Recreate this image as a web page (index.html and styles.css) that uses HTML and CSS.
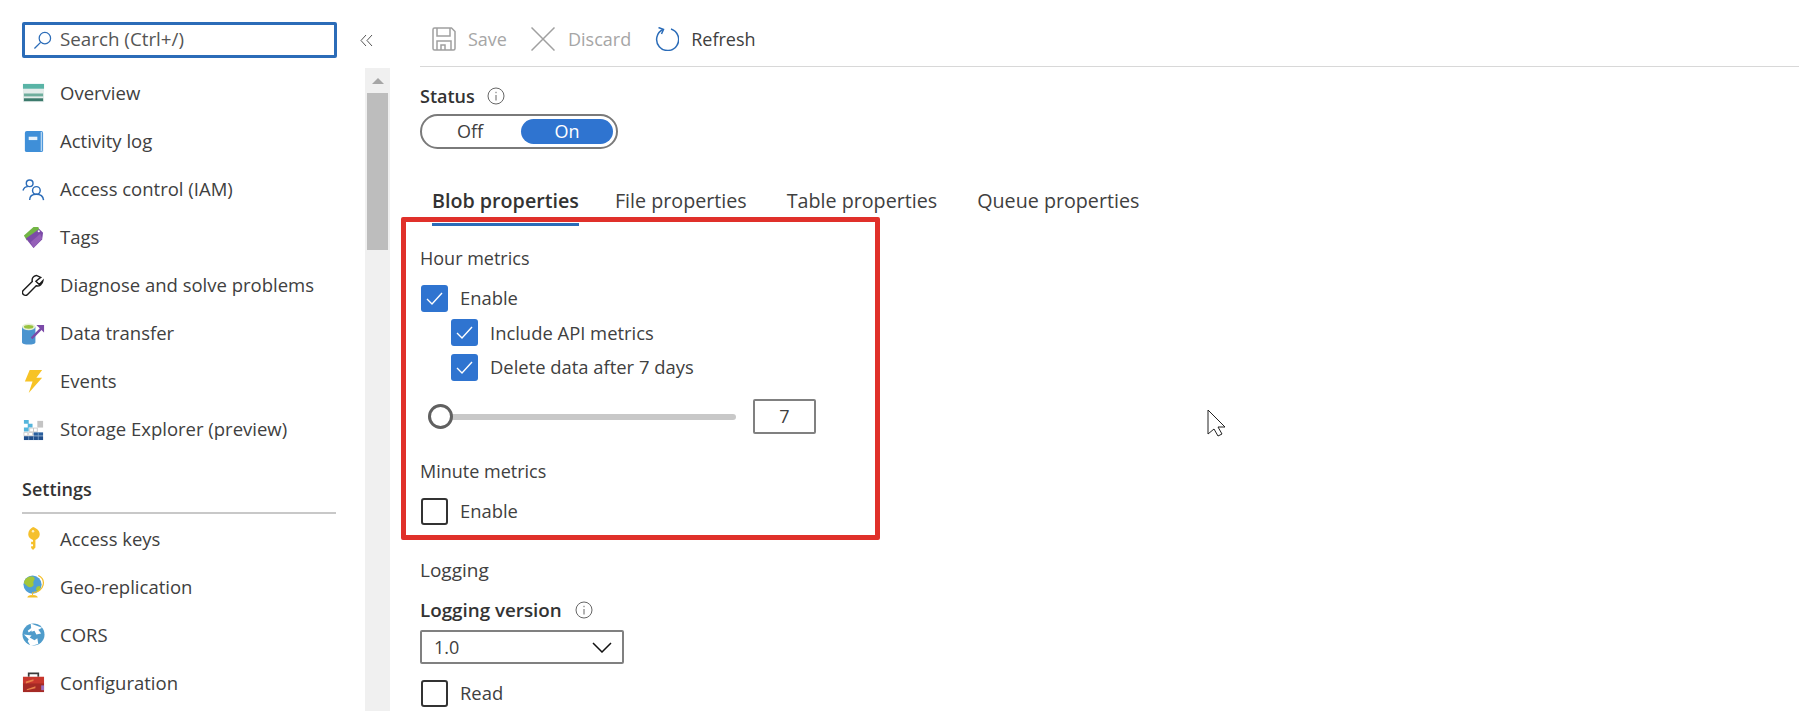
FILE: index.html
```html
<!DOCTYPE html>
<html lang="en">
<head>
<meta charset="utf-8">
<title>Diagnostic settings</title>
<link rel="stylesheet" href="styles.css">
</head>
<body>
<div class="page">
  <aside class="sidebar">
    <div class="search-row">
      <div class="search">
        <svg class="search-icon" viewBox="0 0 20 20"><circle cx="12.5" cy="7.5" r="6" fill="none" stroke="#2b6cb8" stroke-width="1.3"/><path d="M8 12 1.5 18.5" stroke="#2b6cb8" stroke-width="1.4" fill="none"/></svg>
        <span>Search (Ctrl+/)</span>
      </div>
      <svg class="collapse" viewBox="0 0 13 13"><path d="M6 1 1 6.5 6 12M12 1 7 6.5 12 12" fill="none" stroke="#555" stroke-width="1"/></svg>
    </div>
    <div class="side-body">
      <nav class="nav">
        <div class="nav-item"><svg class="ico" viewBox="0 0 24 24"><rect x="1" y="2" width="22" height="19" fill="#e3ecea"/><rect x="1" y="2" width="22" height="5" fill="#59b4a6"/><rect x="2" y="12" width="20" height="3" fill="#6fae9d"/><rect x="2" y="17" width="20" height="3" fill="#3c7a6c"/></svg><span>Overview</span></div>
        <div class="nav-item"><svg class="ico" viewBox="0 0 24 24"><rect x="3" y="1" width="19" height="22" rx="2" fill="#3f8fd8"/><rect x="19.500" y="2" width="1.500" height="20" fill="#b5d6f2"/><rect x="7" y="7" width="9" height="3.500" fill="#e8f2fb"/></svg><span>Activity log</span></div>
        <div class="nav-item"><svg class="ico" viewBox="0 0 24 24" fill="none" stroke="#2b6cb8" stroke-width="1.500"><circle cx="8" cy="5.500" r="3.500"/><path d="M1 13c1-3 3-4 5-4"/><circle cx="15" cy="13" r="4"/><path d="M8 23c0-4 3-6 7-6s7 2 7.500 6"/></svg><span>Access control (IAM)</span></div>
        <div class="nav-item"><svg class="ico" viewBox="0 0 24 24"><path d="M12 1 2 10l3 5L18 3.500 17 1z" fill="#72b544"/><path d="M4 13 18 3l4 4-1 7-9 9z" fill="#7c4ba8"/><path d="M9 17 19 8l2 5-9 10z" fill="#9560b8"/><circle cx="17.500" cy="5.500" r="1.100" fill="#fff"/></svg><span>Tags</span></div>
        <div class="nav-item"><svg class="ico" viewBox="0 0 24 24" fill="none" stroke="#1c1c1c" stroke-width="1.500"><path d="M15 1.500c-3 .5-5 3-4.300 6.300L1.500 17c-1.500 1.500-1 3.500 0 4.500s3 1.200 4.300-.2l9-9c3.400.8 6.500-1.500 7-5.300L18 11l-3.500-3.500 5-4z"/></svg><span>Diagnose and solve problems</span></div>
        <div class="nav-item"><svg class="ico" viewBox="0 0 24 24"><path d="M0 5v16c0 1.500 3 2.500 7 2.500s7-1 7-2.500V5z" fill="#4b94cf"/><ellipse cx="7" cy="5" rx="7" ry="3.500" fill="#e6efd5"/><ellipse cx="7" cy="5" rx="5" ry="2" fill="#98c23f"/><path d="M10 17 20 7" stroke="#7b4aa8" stroke-width="2.500"/><path d="M15 3h8v8z" fill="#7b4aa8"/></svg><span>Data transfer</span></div>
        <div class="nav-item"><svg class="ico" viewBox="0 0 24 24"><path d="M8 0h13l-6 8h6L7 24l4-12H3z" fill="#f7c325"/></svg><span>Events</span></div>
        <div class="nav-item"><svg class="ico" viewBox="0 0 24 24"><path d="M2 2h5v4H2zM6 6h5v4H6zM2 10h5v4H2z" fill="#55b5dc"/><path d="M16 3h6v7h-6z" fill="#c4c4c4"/><path d="M8 10.500h4v4H8zM12 10.500h4v4h-4zM2 15h4v3.500H2zM7 15h4v3.500H7z" fill="#fff" stroke="#c4c4c4" stroke-width=".8"/><path d="M12 15h10v3.500H12z" fill="#2a5f9e"/><path d="M2 19h20v4H2z" fill="#214f8c"/><path d="M7 19v4M12 19v4M17 15v8" stroke="#8fb2d4" stroke-width=".7"/></svg><span>Storage Explorer (preview)</span></div>
        <div class="nav-heading">Settings</div>
        <div class="nav-item"><svg class="ico" viewBox="0 0 24 24"><path d="M11.500 0c4 1.500 7 4 7 7.500 0 3-2 5-4.500 6v8l-2.500 2.500-2-2v-2h2V18h-2v-2.500h2v-2c-3-1-5-3-5-6 0-3.500 2.500-6 5-7.500z" fill="#f5c02c"/><circle cx="11.500" cy="4.500" r="1.300" fill="#fdf0c4"/></svg><span>Access keys</span></div>
        <div class="nav-item"><svg class="ico" viewBox="0 0 24 24"><circle cx="11" cy="10" r="9.500" fill="#4f9fd6"/><path d="M5 3c3-2 7-2 8 0s-2 3-1 6-4 5-6 3-4-3-4-4 1-4 3-5zM16 12c2-1 4-1 3 2s-3 3-4 2 0-3 1-4z" fill="#a4c639"/><path d="M17 .5c4 2 6 6 5 10s-5 8-10 7.500" fill="none" stroke="#f5c02c" stroke-width="1.300"/><path d="M11 18v3M6 23c1-2 9-2 10 0z" fill="#f5c02c" stroke="#f5c02c"/></svg><span>Geo-replication</span></div>
        <div class="nav-item"><svg class="ico" viewBox="0 0 24 24"><circle cx="12" cy="12" r="11.500" fill="#4f9ccb"/><path d="M9 .5 21 5l-4 2 3 4-5 1-2-4-3 1z" fill="#fff"/><path d="M2 12l8 1-2 2 5 3 3-2 1 6-8 2-3-5 1-2z" fill="#fff"/><path d="M6 8l4-3 1 2-4 3z" fill="#fff"/></svg><span>CORS</span></div>
        <div class="nav-item"><svg class="ico" viewBox="0 0 24 24"><path d="M7 6V2.500h10V6" fill="none" stroke="#3a3a3a" stroke-width="1.800"/><rect x="1" y="6" width="22" height="8" fill="#c8372d"/><rect x="1" y="13" width="22" height="9" fill="#a52a25"/><path d="M4 11 12 8.500v2L4 13zM5 19l9-3v2l-9 2z" fill="#e9824a"/><rect x="20" y="15" width="3" height="5" fill="#9a6fc0"/></svg><span>Configuration</span></div>
      </nav>
      <div class="scrollbar">
        <div class="scroll-up"><span class="arrow"></span></div>
        <div class="thumb"></div>
      </div>
    </div>
  </aside>

  <main class="main">
    <div class="toolbar">
      <div class="tool disabled"><svg class="tool-ico" viewBox="0 0 24 24" fill="none" stroke="#a0a0a0" stroke-width="1.500"><path d="M1 2.500A1.500 1.500 0 0 1 2.500 1h17L23 4.500v17a1.500 1.500 0 0 1-1.500 1.500h-19A1.500 1.500 0 0 1 1 21.500z"/><path d="M5 1v8h13V1M5 23v-9h14v9M9 23v-5h4v5"/></svg><span>Save</span></div>
      <div class="tool disabled wide"><svg class="tool-ico" viewBox="0 0 24 24" fill="none" stroke="#a0a0a0" stroke-width="1.500"><path d="M.5.500l23 23M23.500.500l-23 23"/></svg><span>Discard</span></div>
      <div class="tool"><svg class="tool-ico" viewBox="0 0 24 24" fill="none" stroke="#2b6cb8" stroke-width="1.500"><path d="M8 2.500A11 11 0 1 0 16 2"/><path d="M3.500 .5 8.500 2.500 6.500 7"/></svg><span>Refresh</span></div>
    </div>

    <div class="label-row status-row"><span class="strong">Status</span><svg class="info" viewBox="0 0 18 18"><circle cx="9" cy="9" r="8" fill="none" stroke="#666" stroke-width="1"/><path d="M9 8v5.500M9 4.800v1.400" stroke="#666" stroke-width="1"/></svg></div>
    <div class="toggle"><span class="seg">Off</span><span class="seg on">On</span></div>

    <div class="tabs">
      <span class="tab active">Blob properties</span>
      <span class="tab">File properties</span>
      <span class="tab spaced">Table properties</span>
      <span class="tab spaced">Queue properties</span>
    </div>

    <div class="section hour">Hour metrics</div>
    <label class="check first"><span class="box checked"><svg viewBox="0 0 27 27"><path d="M6 14l5 5 10-11" fill="none" stroke="#fff" stroke-width="1.400"/></svg></span>Enable</label>
    <label class="check sub first-sub"><span class="box checked"><svg viewBox="0 0 27 27"><path d="M6 14l5 5 10-11" fill="none" stroke="#fff" stroke-width="1.400"/></svg></span>Include API metrics</label>
    <label class="check sub second-sub"><span class="box checked"><svg viewBox="0 0 27 27"><path d="M6 14l5 5 10-11" fill="none" stroke="#fff" stroke-width="1.400"/></svg></span>Delete data after 7 days</label>
    <div class="slider-row">
      <div class="slider"><span class="knob"></span></div>
      <div class="num">7</div>
    </div>
    <div class="section minute">Minute metrics</div>
    <label class="check first"><span class="box"></span>Enable</label>
    <div class="section logging">Logging</div>
    <div class="label-row version-row"><span class="strong">Logging version</span><svg class="info" viewBox="0 0 18 18"><circle cx="9" cy="9" r="8" fill="none" stroke="#666" stroke-width="1"/><path d="M9 8v5.500M9 4.800v1.400" stroke="#666" stroke-width="1"/></svg></div>
    <div class="select"><span>1.0</span><svg class="chev" viewBox="0 0 20 11"><path d="M1 1l9 9 9-9" fill="none" stroke="#111" stroke-width="1.500"/></svg></div>
    <label class="check read"><span class="box"></span>Read</label>
  </main>

  <div class="highlight"></div>
  <svg class="cursor" viewBox="0 0 19 28"><path d="M1 1v24l6-5 4 7 4-2-4-7h7z" fill="#fff" stroke="#222" stroke-width="1"/></svg>
</div>
</body>
</html>
```

FILE: styles.css
```css
* { box-sizing: border-box; }
html, body { margin: 0; padding: 0; background: #fff; }
body { font-family: "Open Sans", "Noto Sans", sans-serif; font-size: 18px; color: #404040; }
.page { position: relative; display: flex; width: 1799px; height: 711px; overflow: hidden; }

.sidebar { width: 420px; flex: none; display: flex; flex-direction: column; }
.search-row { display: flex; align-items: center; padding: 22px 0 0 22px; }
.search { width: 315px; height: 36px; border: 3px solid #2b6cb8; border-radius: 2px; display: flex; align-items: center; gap: 8px; padding-left: 8px; color: #555; font-size: 18.8px; }
.search span { padding-bottom: 2px; }
.search-icon { width: 19px; height: 19px; flex: none; }
.collapse { width: 13px; height: 13px; margin-left: 23px; }
.side-body { display: flex; flex: 1; margin-top: 10px; min-height: 0; }
.nav { width: 343px; margin-left: 22px; flex: none; padding-top: 1px; font-size: 18.5px; }
.nav-item { height: 48px; display: flex; align-items: center; gap: 15px; }
.nav-item span { padding-bottom: 2px; }
.nav-heading ~ .nav-item span { padding-bottom: 0; }
.ico { width: 23px; height: 23px; flex: none; }
.nav-heading { height: 37px; margin-top: 24px; border-bottom: 2px solid #c8c8c8; width: 314px; font-weight: 600; line-height: 24px; color: #333; font-size: 18px; }
.scrollbar { width: 25px; flex: none; background: #f0f0f0; display: flex; flex-direction: column; align-items: center; }
.scroll-up { height: 25px; display: flex; align-items: center; justify-content: center; }
.arrow { width: 0; height: 0; border-left: 6px solid transparent; border-right: 6px solid transparent; border-bottom: 6px solid #a6a6a6; }
.thumb { width: 21px; height: 157px; background: #bdbdbd; }

.main { flex: 1; min-width: 0; }
.toolbar { height: 67px; border-bottom: 1px solid #d8d8d8; display: flex; align-items: center; gap: 24px; padding: 12px 0 0 12px; }
.tool { display: flex; align-items: center; gap: 12px; }
.tool.disabled { color: #a6a6a6; }
.tool.wide { gap: 13px; }
.tool-ico { width: 24px; height: 24px; flex: none; }
.label-row { display: flex; align-items: center; gap: 12px; height: 24px; }
.strong { font-weight: 600; color: #333; }
.status-row { margin-top: 17px; }
.info { width: 18px; height: 18px; }
.toggle { margin-top: 6px; width: 198px; height: 35px; border: 2px solid #7a7a7a; border-radius: 18px; display: flex; align-items: center; padding: 3px; }
.seg { flex: 1; height: 25px; line-height: 25px; text-align: center; border-radius: 13px; padding-right: 6px; }
.seg.on { flex: none; width: 92px; background: #2f74d0; color: #fff; padding-right: 0; }
.tabs { display: flex; gap: 36px; padding-left: 12px; margin-top: 39px; font-size: 19.7px; }
.tab { height: 38px; line-height: 26px; border-bottom: 3px solid transparent; }
.tab.spaced { margin-left: 4px; }
.tab.active { font-weight: 600; border-bottom-color: #2b6cb8; color: #333; }
.section { height: 24px; line-height: 24px; }
.hour { margin-top: 20px; }
.minute { margin-top: 25px; }
.logging { margin-top: 33px; font-size: 19px; }
.check { display: flex; align-items: flex-start; gap: 12px; height: 27px; line-height: 25px; font-size: 18.4px; }
.first { margin-top: 15px; margin-left: 1px; }
.sub { margin-left: 31px; }
.first-sub { margin-top: 7px; line-height: 27px; }
.second-sub { margin-top: 8px; }
.read { margin-top: 16px; margin-left: 1px; }
.box { width: 27px; height: 27px; flex: none; border: 2px solid #333; border-radius: 3px; display: block; }
.box.checked { background: #2f74d0; border: 0; }
.box svg { display: block; width: 27px; height: 27px; }
.slider-row { display: flex; align-items: center; margin-top: 18px; padding-left: 8px; height: 35px; }
.slider { position: relative; width: 308px; height: 6px; border-radius: 3px; background: #c8c8c8; }
.knob { position: absolute; left: 0; top: -9.500px; width: 25px; height: 25px; border-radius: 50%; background: #fff; border: 3px solid #606060; }
.num { margin-left: 17px; width: 63px; height: 35px; border: 2px solid #808080; border-radius: 2px; text-align: center; line-height: 31px; }
.version-row { margin-top: 16px; gap: 13px; }
.version-row .strong { font-size: 18.8px; }
.select { margin-top: 8px; width: 204px; height: 34px; border: 2px solid #808080; border-radius: 2px; display: flex; align-items: center; justify-content: space-between; padding: 0 10px 0 12px; }
.chev { width: 20px; height: 11px; }

.highlight { position: absolute; left: 401px; top: 217px; width: 479px; height: 323px; border: 5px solid #e0302a; border-radius: 2px; pointer-events: none; }
.cursor { position: absolute; left: 1207px; top: 409px; width: 19px; height: 28px; }
```
